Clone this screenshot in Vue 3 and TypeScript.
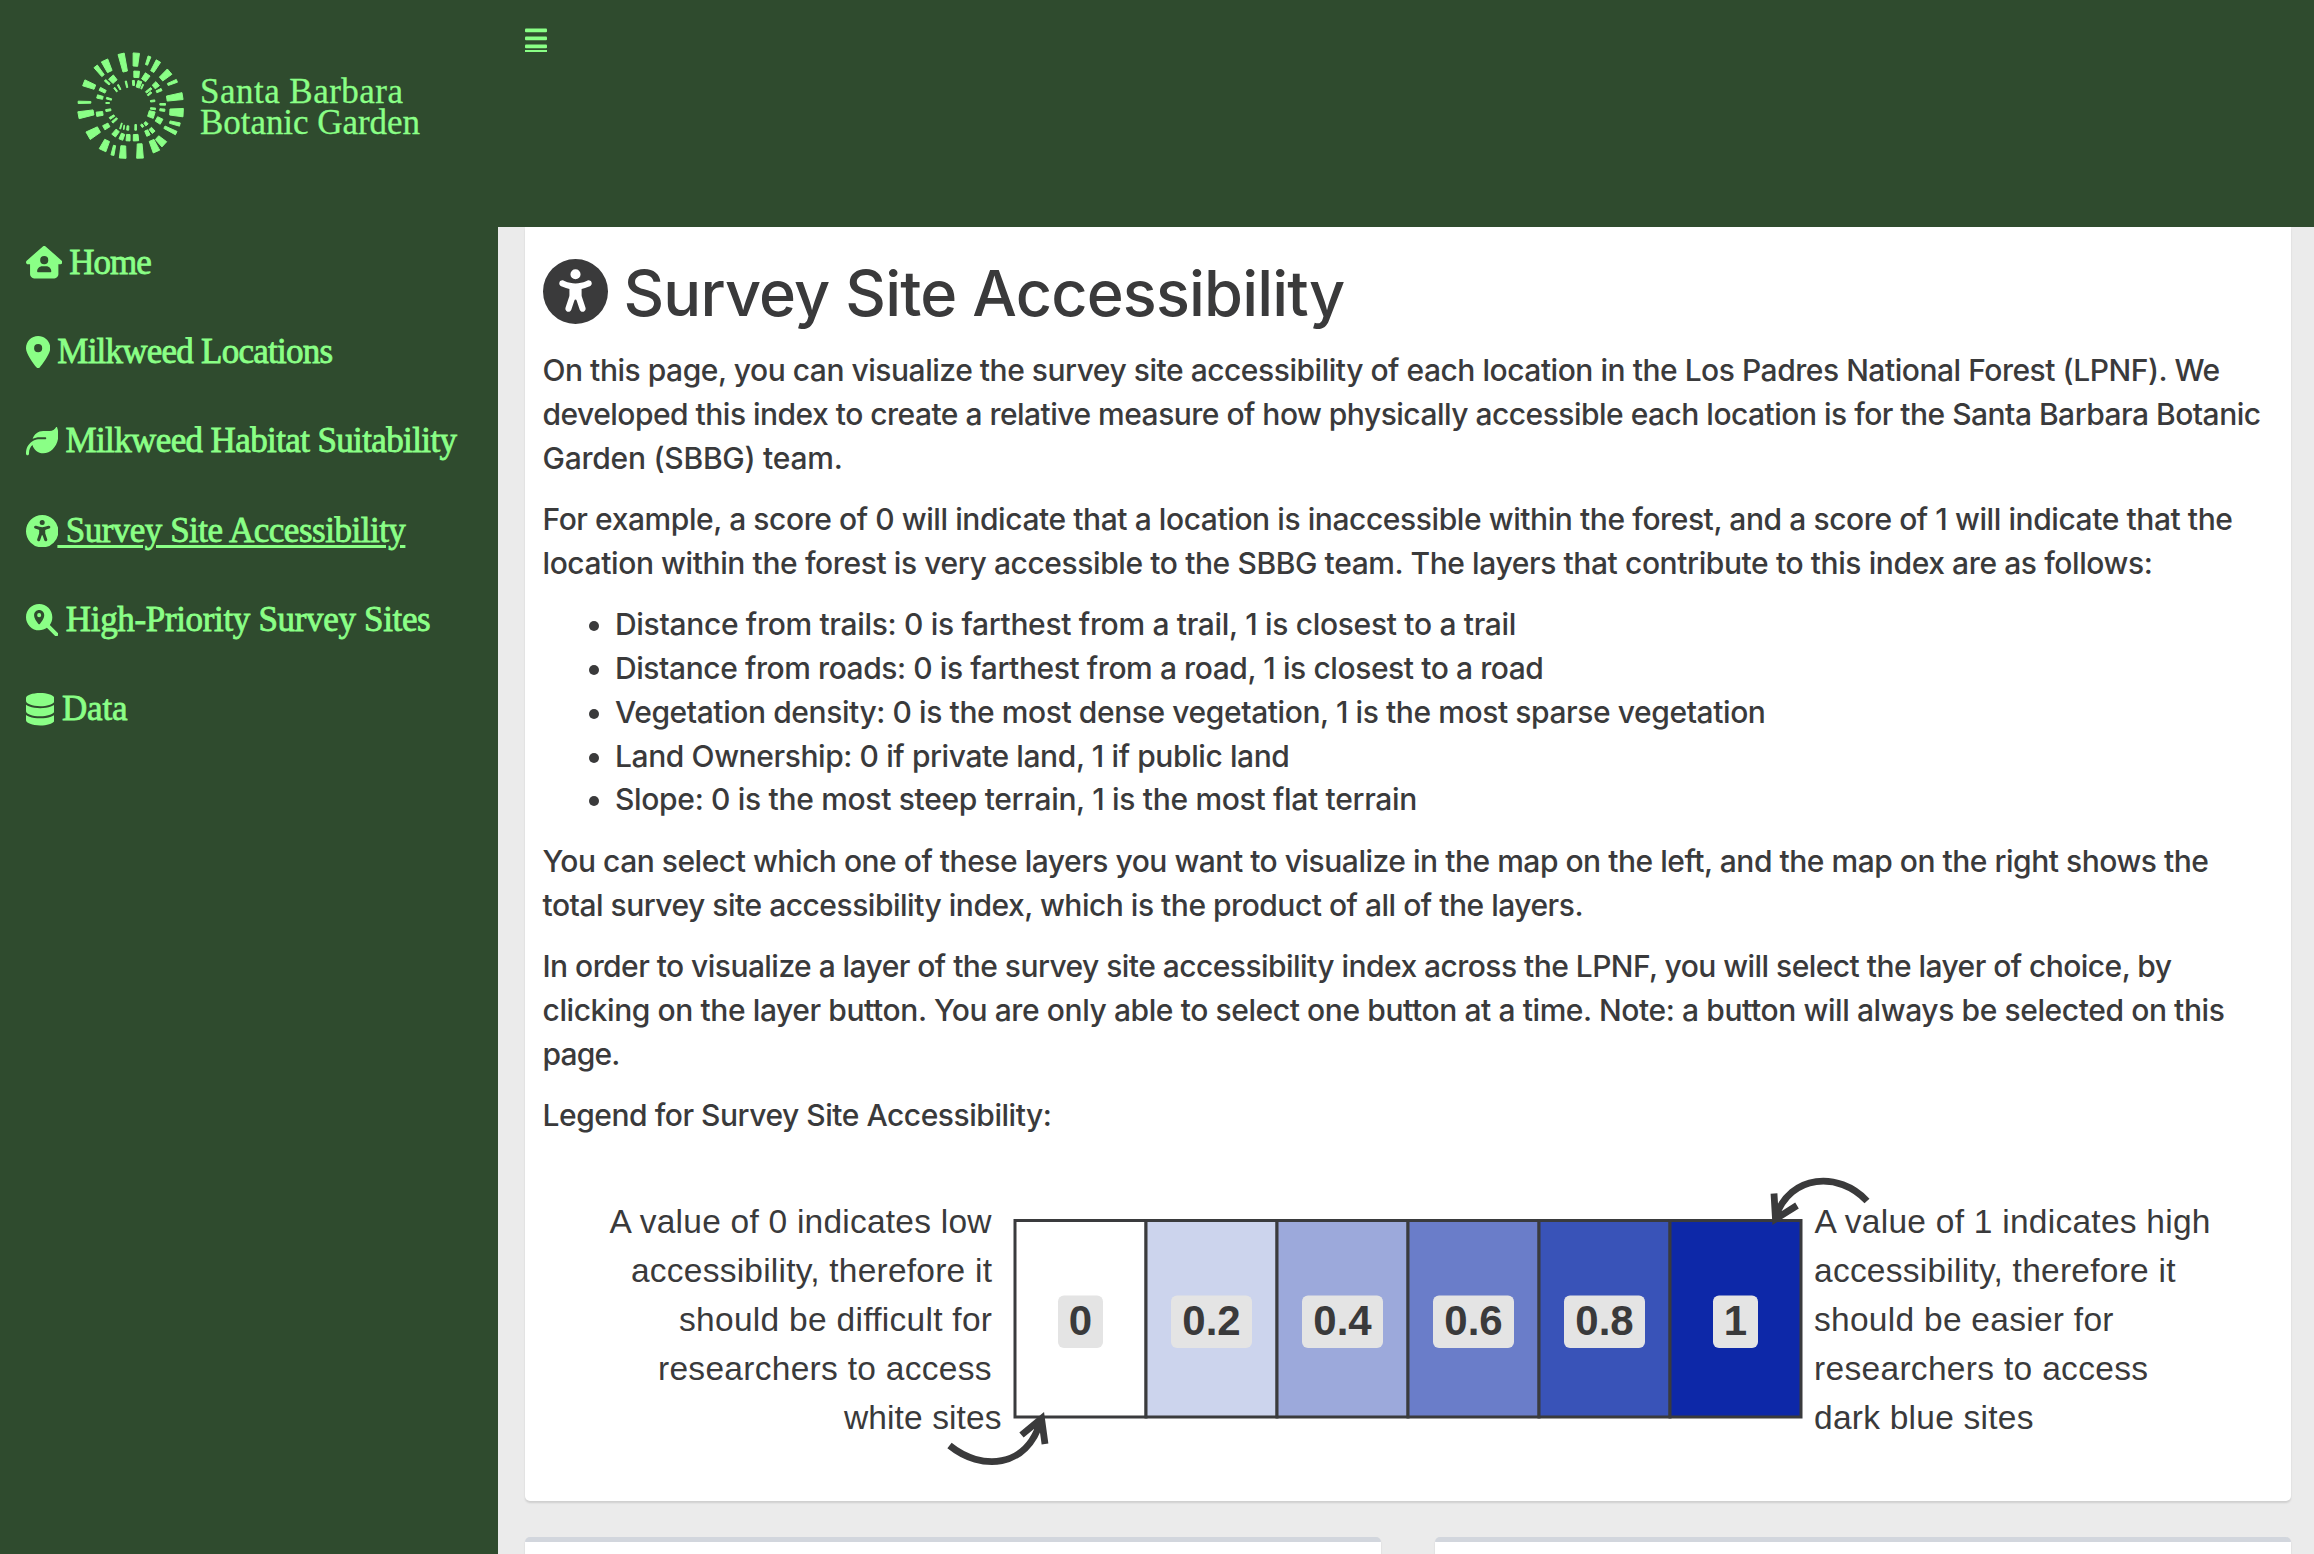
<script setup lang="ts">
import type { Directive } from 'vue'

interface NavItem { label: string; width: number; box: [number, number]; path: string; active?: boolean }
interface Line { text: string; width: number }

// Tracks a line of text out (or in) so that it sets to a given measure.
const vFit: Directive<HTMLElement, number> = {
  mounted(el, binding) {
    const natural = el.getBoundingClientRect().width
    const count = (el.textContent ?? '').length
    el.style.letterSpacing = `${(binding.value - natural) / count}px`
  },
}

const accessPath = 'M0 256a256 256 0 1 1 512 0A256 256 0 1 1 0 256zm161.5-86.1c-12.2-5.2-26.3 .4-31.5 12.6s.4 26.3 12.6 31.5l11.9 5.1c17.3 7.4 35.2 12.9 53.6 16.3v50.1c0 4.3-.7 8.6-2.1 12.6l-28.7 86.1c-4.2 12.6 2.6 26.2 15.2 30.4s26.2-2.6 30.4-15.2l24.4-73.2c1.3-3.8 4.8-6.4 8.8-6.4s7.6 2.6 8.8 6.4l24.4 73.2c4.2 12.6 17.8 19.4 30.4 15.2s19.4-17.8 15.2-30.4l-28.7-86.1c-1.4-4.1-2.1-8.3-2.1-12.6V235.5c18.4-3.5 36.3-8.9 53.6-16.3l11.9-5.1c12.2-5.2 17.8-19.3 12.6-31.5s-19.3-17.8-31.5-12.6L338.7 175c-26.1 11.2-54.2 17-82.7 17s-56.5-5.8-82.7-17l-11.9-5.1zM256 160a40 40 0 1 0 0-80 40 40 0 1 0 0 80z'

const nav: NavItem[] = [
  { label: 'Home', width: 89.5, box: [576, 512], path: 'M575.8 255.5c0 18-15 32.1-32 32.1h-32l.7 160.2c.2 35.5-28.5 64.3-64 64.3H128.1c-35.3 0-64-28.7-64-64V287.6H32c-18 0-32-14-32-32.1c0-9 3-17 10-24L266.4 8c7-7 15-8 22-8s15 2 21 7L564.8 231.5c8 7 12 15 11 24zM352 224a64 64 0 1 0 -128 0 64 64 0 1 0 128 0zm-96 96c-44.2 0-80 35.8-80 80c0 8.8 7.2 16 16 16H384c8.8 0 16-7.2 16-16c0-44.2-35.8-80-80-80H256z' },
  { label: 'Milkweed Locations', width: 283, box: [384, 512], path: 'M215.7 499.2C267 435 384 279.4 384 192C384 86 298 0 192 0S0 86 0 192c0 87.4 117 243 168.3 307.2c12.3 15.3 35.1 15.3 47.4 0zM192 128a64 64 0 1 1 0 128 64 64 0 1 1 0-128z' },
  { label: 'Milkweed Habitat Suitability', width: 399, box: [512, 512], path: 'M272 96c-78.6 0-145.1 51.5-167.7 122.5c33.6-17 71.5-26.5 111.7-26.5h88c8.8 0 16 7.2 16 16s-7.2 16-16 16H288 216s0 0 0 0c-16.6 0-32.7 1.9-48.3 5.4c-25.9 5.9-49.9 16.4-71.4 30.7c0 0 0 0 0 0C38.3 298.8 0 364.9 0 440v16c0 13.3 10.7 24 24 24s24-10.7 24-24V440c0-48.7 20.7-92.5 53.8-123.2C121.6 392.3 190.3 448 272 448l1 0c132.1-.7 239-130.9 239-291.4c0-42.6-7.5-83.1-21.1-119.6c-2.6-6.9-12.7-6.6-16.2-.1C455.9 72.1 418.7 96 376 96L272 96z' },
  { label: 'Survey Site Accessibility', width: 348, box: [512, 512], path: accessPath, active: true },
  { label: 'High-Priority Survey Sites', width: 373, box: [512, 512], path: 'M416 208c0 45.9-14.9 88.3-40 122.7L502.6 457.4c12.5 12.5 12.5 32.8 0 45.3s-32.8 12.5-45.3 0L330.7 376c-34.4 25.2-76.8 40-122.7 40C93.1 416 0 322.9 0 208S93.1 0 208 0S416 93.1 416 208zM288 176c0-44.2-35.8-80-80-80s-80 35.8-80 80c0 48.8 46.5 111.6 68.6 138.6c6 7.3 16.8 7.3 22.7 0c22.1-27 68.6-89.8 68.6-138.6zm-112 0a32 32 0 1 1 64 0 32 32 0 1 1 -64 0z' },
  { label: 'Data', width: 74, box: [448, 512], path: 'M448 80v48c0 44.2-100.3 80-224 80S0 172.2 0 128V80C0 35.8 100.3 0 224 0S448 35.8 448 80zM393.2 214.7c20.8-7.4 39.9-16.9 54.8-28.6V288c0 44.2-100.3 80-224 80S0 332.2 0 288V186.1c14.9 11.8 34 21.2 54.8 28.6C99.7 230.7 159.5 240 224 240s124.3-9.3 169.2-25.3zM0 346.1c14.9 11.8 34 21.2 54.8 28.6C99.7 390.7 159.5 400 224 400s124.3-9.3 169.2-25.3c20.8-7.4 39.9-16.9 54.8-28.6V432c0 44.2-100.3 80-224 80S0 476.2 0 432V346.1z' },
]

const intro: Line[][] = [
  [
    { text: 'On this page, you can visualize the survey site accessibility of each location in the Los Padres National Forest (LPNF). We', width: 1677 },
    { text: 'developed this index to create a relative measure of how physically accessible each location is for the Santa Barbara Botanic', width: 1718 },
    { text: 'Garden (SBBG) team.', width: 300 },
  ],
  [
    { text: 'For example, a score of 0 will indicate that a location is inaccessible within the forest, and a score of 1 will indicate that the', width: 1690 },
    { text: 'location within the forest is very accessible to the SBBG team. The layers that contribute to this index are as follows:', width: 1610 },
  ],
]
const layers: Line[] = [
  { text: 'Distance from trails: 0 is farthest from a trail, 1 is closest to a trail', width: 901 },
  { text: 'Distance from roads: 0 is farthest from a road, 1 is closest to a road', width: 928.5 },
  { text: 'Vegetation density: 0 is the most dense vegetation, 1 is the most sparse vegetation', width: 1150.5 },
  { text: 'Land Ownership: 0 if private land, 1 if public land', width: 674.5 },
  { text: 'Slope: 0 is the most steep terrain, 1 is the most flat terrain', width: 802 },
]
const outro: Line[][] = [
  [
    { text: 'You can select which one of these layers you want to visualize in the map on the left, and the map on the right shows the', width: 1666 },
    { text: 'total survey site accessibility index, which is the product of all of the layers.', width: 1040.5 },
  ],
  [
    { text: 'In order to visualize a layer of the survey site accessibility index across the LPNF, you will select the layer of choice, by', width: 1629 },
    { text: 'clicking on the layer button. You are only able to select one button at a time. Note: a button will always be selected on this', width: 1682 },
    { text: 'page.', width: 77 },
  ],
  [{ text: 'Legend for Survey Site Accessibility:', width: 509 }],
]

const cells = [
  { value: '0', fill: '#ffffff' },
  { value: '0.2', fill: '#ccd4ed' },
  { value: '0.4', fill: '#9ca9db' },
  { value: '0.6', fill: '#6a7dc9' },
  { value: '0.8', fill: '#3953b8' },
  { value: '1', fill: '#0d28a8' },
]
const cellX = (i: number) => 1015 + i * 131
const tagWidth = (v: string) => (v.length > 1 ? 81 : 45)

const lowNotes = [
  { text: 'A value of 0 indicates low', x: 609.5, width: 382 },
  { text: 'accessibility, therefore it', x: 631, width: 361 },
  { text: 'should be difficult for', x: 679, width: 313 },
  { text: 'researchers to access', x: 658, width: 333.5 },
  { text: 'white sites', x: 844, width: 157.5 },
]
const highNotes = [
  { text: 'A value of 1 indicates high', x: 1814.5, width: 396 },
  { text: 'accessibility, therefore it', x: 1814, width: 361.5 },
  { text: 'should be easier for', x: 1814, width: 299.5 },
  { text: 'researchers to access', x: 1814, width: 334 },
  { text: 'dark blue sites', x: 1814, width: 219.5 },
]

// Sunburst rays: outer end, inner end, width of the outer end.
const rays: number[][] = [
  [183, 70, 196, 126, 22], [229, 68, 226, 110, 22], [269, 78, 259, 106, 12], [296, 92, 276, 126, 18],
  [330, 124, 302, 148, 24], [352, 152, 322, 164, 12], [369, 198, 319, 206, 24], [371, 248, 328, 246, 28],
  [361, 284, 328, 276, 13], [350, 310, 312, 291, 14], [314, 344, 290, 322, 24], [290, 366, 274, 330, 24],
  [240, 386, 239, 340, 23], [188, 386, 190, 346, 23], [157, 377, 164, 345, 12], [127, 362, 142, 330, 25],
  [83, 318, 118, 298, 29], [54, 256, 102, 247, 24], [53, 217, 94, 217, 10], [70, 158, 106, 172, 22],
  [106, 108, 130, 138, 16], [133, 90, 150, 126, 24],
  [230, 122, 229, 144, 20], [264, 132, 250, 152, 20], [294, 160, 280, 172, 19], [306, 178, 288, 186, 10],
  [318, 223, 298, 223, 8], [316, 241, 298, 239, 10], [306, 276, 288, 266, 20], [282, 308, 270, 294, 14],
  [266, 318, 258, 300, 14], [228, 334, 227, 312, 19], [204, 334, 205, 312, 15], [182, 330, 190, 310, 15],
  [160, 318, 174, 300, 17], [130, 294, 148, 284, 17], [108, 253, 130, 250, 16], [110, 199, 130, 204, 13],
  [118, 176, 138, 186, 13], [134, 150, 150, 164, 9], [152, 140, 166, 156, 22],
  [220, 150, 221, 168, 9], [240, 152, 233, 174, 15], [250, 162, 243, 178, 6], [275, 174, 257, 188, 9],
  [275, 186, 262, 197, 8], [286, 212, 270, 214, 8], [288, 237, 270, 235, 8], [284, 256, 264, 250, 23],
  [262, 286, 254, 276, 12], [250, 292, 243, 282, 9], [227, 302, 227, 282, 8], [203, 302, 204, 286, 9],
  [191, 300, 193, 284, 5], [180, 298, 186, 278, 6], [156, 278, 172, 264, 9], [148, 266, 164, 256, 9],
  [136, 242, 154, 239, 9], [136, 219, 150, 219, 6], [138, 204, 156, 209, 8], [197, 152, 202, 174, 7],
  [173, 163, 182, 180, 7], [162, 172, 172, 186, 7],
]
const rayPath = rays.map(([x1, y1, x2, y2, w]) => {
  const len = Math.hypot(x2 - x1, y2 - y1)
  const ux = (x2 - x1) / len
  const uy = (y2 - y1) / len
  const a = w / 2 - 1.5
  const b = a * (len > 26 ? 0.72 : 0.88)
  const sx = x1 + ux * 1.5, sy = y1 + uy * 1.5, ex = x2 - ux * 1.5, ey = y2 - uy * 1.5
  const pts = [[sx - uy * a, sy + ux * a], [sx + uy * a, sy - ux * a], [ex + uy * b, ey - ux * b], [ex - uy * b, ey + ux * b]]
  return 'M' + pts.map((p) => p.map((n) => n.toFixed(1)).join(' ')).join('L') + 'Z'
}).join('')
</script>

<template>
  <div class="page">
    <aside class="sidebar">
      <svg class="logo" viewBox="0 0 498 218" role="img" aria-label="Santa Barbara Botanic Garden">
        <path class="burst" transform="translate(60 30) scale(.33333)" :d="rayPath" />
        <text x="200" y="102.7" textLength="203">Santa Barbara</text>
        <text x="200" y="134" textLength="220">Botanic Garden</text>
      </svg>
      <nav class="nav">
        <a v-for="item in nav" :key="item.label" class="nav-item" :class="{ active: item.active }">
          <svg class="nav-icon" :viewBox="`0 0 ${item.box[0]} ${item.box[1]}`">
            <path :d="item.path" fill-rule="evenodd" />
          </svg>
          <span class="nav-label"><span v-fit="item.width">&nbsp;{{ item.label }}</span></span>
        </a>
      </nav>
    </aside>

    <div class="body">
      <header class="topbar">
        <svg class="burger" viewBox="0 0 22 24">
          <rect y=".4" width="22" height="3.8" rx="1" />
          <rect y="8.4" width="22" height="3.8" rx="1" />
          <rect y="16.4" width="22" height="3.8" rx="1" />
          <rect y="22" width="22" height="2" />
        </svg>
      </header>

      <main class="content">
        <section class="card intro">
          <h1 class="title">
            <svg class="title-icon" viewBox="0 0 512 512"><path :d="accessPath" fill-rule="evenodd" /></svg>
            <span v-fit="721">Survey Site Accessibility</span>
          </h1>
          <p v-for="(para, i) in intro" :key="'i' + i">
            <span v-for="line in para" :key="line.text" class="line"><span v-fit="line.width">{{ line.text }}</span></span>
          </p>
          <ul>
            <li v-for="line in layers" :key="line.text"><span v-fit="line.width">{{ line.text }}</span></li>
          </ul>
          <p v-for="(para, i) in outro" :key="'o' + i">
            <span v-for="line in para" :key="line.text" class="line"><span v-fit="line.width">{{ line.text }}</span></span>
          </p>

          <svg class="legend" viewBox="525 1155 1766 346">
            <g class="note">
              <text v-for="(n, i) in lowNotes" :key="n.text" :x="n.x" :y="1234.6 + i * 49.2" :textLength="n.width">{{ n.text }}</text>
              <text v-for="(n, i) in highNotes" :key="n.text" :x="n.x" :y="1234.6 + i * 49.2" :textLength="n.width">{{ n.text }}</text>
            </g>
            <g v-for="(c, i) in cells" :key="c.value">
              <rect class="cell" :x="cellX(i)" y="1222.5" width="131" height="196.5" :fill="c.fill" />
              <rect class="tag" :x="cellX(i) + 65.5 - tagWidth(c.value) / 2" y="1297.5" :width="tagWidth(c.value)" height="52.6" rx="6" />
              <text class="value" :x="cellX(i) + 65.5" y="1337.2">{{ c.value }}</text>
            </g>
            <path class="arrow" d="M949.5 1447.500C981 1473 1027 1471 1041 1422M1021.5 1437L1041.5 1420.500L1045 1446" />
            <path class="arrow" d="M1867 1203C1839 1173 1790 1176 1775.500 1219M1774 1195.500L1775.500 1221L1797 1207.500" />
          </svg>
        </section>

        <div class="maps">
          <section class="card map"></section>
          <section class="card map"></section>
        </div>
      </main>
    </div>
  </div>
</template>

<style>
body {
  margin: 0;
  overflow: hidden;
}
</style>

<style scoped>
.page {
  display: flex;
  width: 2314px;
  height: 1554px;
  overflow: hidden;
  background: #ebebeb;
  color: #3a3a3b;
  font-family: Inter, "Liberation Sans", sans-serif;
}
.sidebar {
  width: 498px;
  flex: none;
  background: #2f4b2e;
  color: #8aff86;
  font-family: "Liberation Serif", serif;
}
.logo {
  display: block;
  width: 498px;
  height: 218px;
  fill: #8aff86;
  font-size: 35px;
}
.logo text {
  stroke: #8aff86;
  stroke-width: 0.3px;
}
.burst {
  stroke: #8aff86;
  stroke-width: 3;
  stroke-linejoin: round;
}
.nav {
  display: flex;
  flex-direction: column;
}
.nav-item {
  display: flex;
  align-items: center;
  height: 89.35px;
  padding-left: 26px;
}
.nav-icon {
  flex: none;
  height: 32.4px;
  fill: #8aff86;
}
.nav-label {
  margin-left: -1px;
  font-size: 35px;
  line-height: 40px;
  white-space: nowrap;
  -webkit-text-stroke: 0.8px #8aff86;
}
.active .nav-label > span {
  text-decoration: underline;
  text-decoration-thickness: 2.5px;
  text-underline-offset: 3px;
}
.body {
  flex: 1;
  min-width: 0;
  display: flex;
  flex-direction: column;
}
.topbar {
  flex: none;
  height: 227px;
  box-sizing: border-box;
  padding: 28px 27px;
  background: #2f4b2e;
}
.burger {
  display: block;
  width: 22px;
  height: 24px;
  fill: #8aff86;
}
.content {
  padding: 0 23px 0 27px;
}
.card {
  background: #fff;
  box-shadow: 0 2px 2px rgba(0, 0, 0, 0.12);
}
.intro {
  height: 1274px;
  box-sizing: border-box;
  padding: 25px 17.5px 0;
  border-radius: 0 0 5px 5px;
  font-size: 30px;
  line-height: 43.75px;
  font-weight: 500;
}
.title {
  display: flex;
  align-items: center;
  gap: 16px;
  margin: 0 0 15px;
  height: 82px;
  font-size: 63px;
  line-height: 82px;
  font-weight: 500;
  white-space: nowrap;
}
.title-icon {
  width: 65px;
  height: 65px;
  margin-bottom: 3px;
  fill: #3a3a3b;
}
p {
  margin: 0 0 17.8px;
}
.line {
  display: block;
  white-space: nowrap;
}
ul {
  margin: 0 0 17.8px;
  padding-left: 72.5px;
}
li {
  white-space: nowrap;
}
.legend {
  display: block;
  width: 1766px;
  height: 346px;
  margin: -2.5px -17.5px 0;
}
.note {
  fill: #3a3a3b;
  font: 400 33.5px "Liberation Sans", sans-serif;
}
.cell {
  stroke: #3a3b3d;
  stroke-width: 3;
}
.tag {
  fill: #e4e4e4;
}
.value {
  fill: #3a3a3b;
  font: 700 42px "Liberation Sans", sans-serif;
  text-anchor: middle;
}
.arrow {
  fill: none;
  stroke: #3a3a3b;
  stroke-width: 6.8;
}
.maps {
  display: flex;
  gap: 54px;
  margin-top: 36px;
}
.map {
  flex: 1;
  height: 100px;
  border-top: 5px solid #d2d6dd;
  border-radius: 5px;
}
</style>
